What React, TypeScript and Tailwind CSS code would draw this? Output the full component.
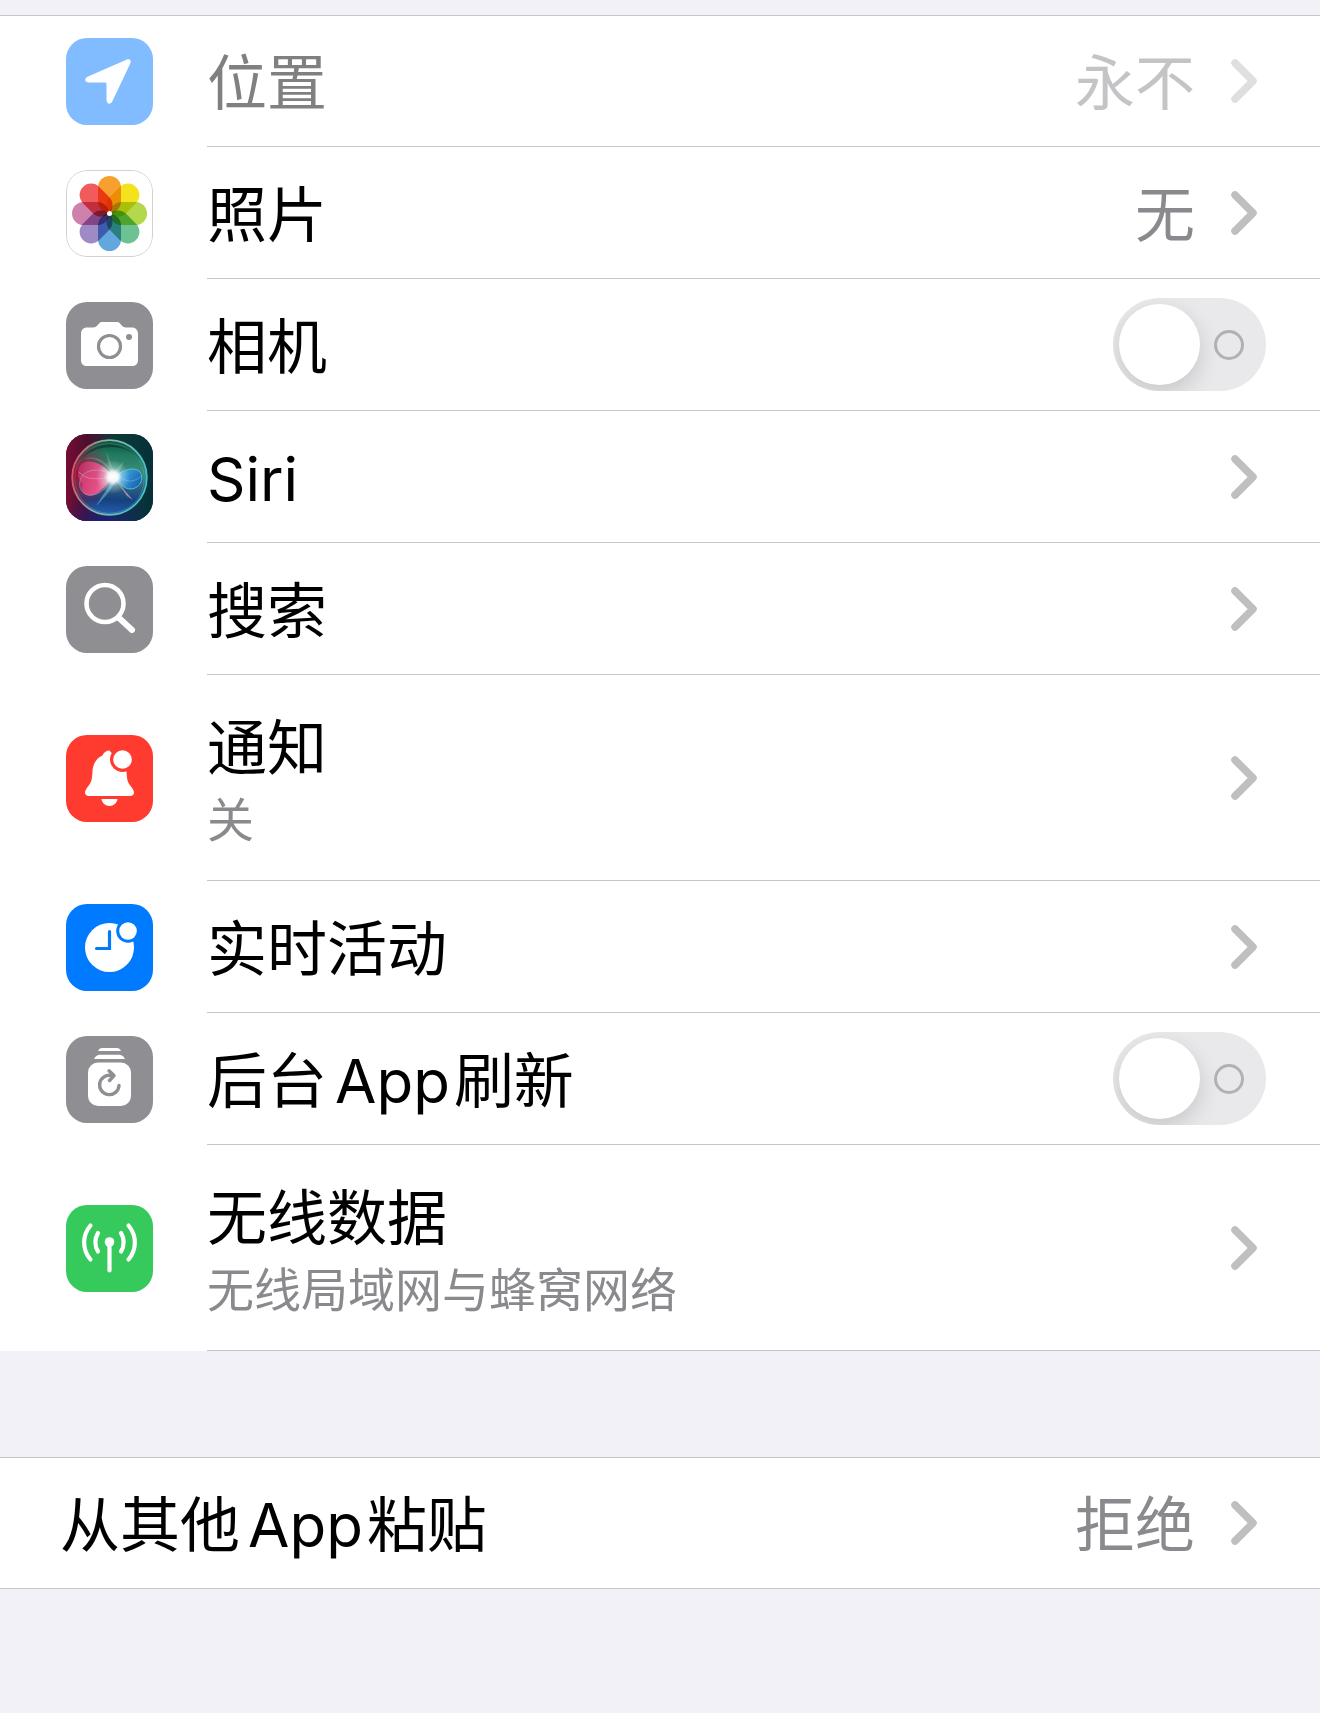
import clsx from 'clsx'
import React, { useState } from 'react'

function LocationIcon() {
    return (
        <path
            d="M61 21.5 L22 38.5 C18 40.5 18.500 44.500 23 44.500 H38.500 C40 44.500 40.500 45 40.500 46.500 V61.500 C40.500 66.500 44.500 67 46.500 63 L64.500 25 C65.500 22 63.500 20.500 61 21.500 Z"
            fill="#fff"
        />
    )
}

const petals = [
    { angle: 0, color: '#f7a030' },
    { angle: 45, color: '#f3e21c' },
    { angle: 90, color: '#b3d84c' },
    { angle: 135, color: '#6cc293' },
    { angle: 180, color: '#62a8de' },
    { angle: 225, color: '#a08ac6' },
    { angle: 270, color: '#cf81ae' },
    { angle: 315, color: '#f15b5c' },
]

function PhotosIcon() {
    return (
        <>
            <rect x="0.5" y="0.5" width="86" height="86" rx="20.500" fill="#fff" stroke="#d2d2d4" />
            <g style={{ isolation: 'isolate' }}>
                {petals.map((petal) => (
                    <rect
                        key={petal.angle}
                        x="32"
                        y="6"
                        width="23"
                        height="37"
                        rx="11.500"
                        fill={petal.color}
                        transform={`rotate(${petal.angle} 43.5 43.5)`}
                        style={{ mixBlendMode: 'multiply' }}
                    />
                ))}
            </g>
            <circle cx="43.500" cy="43.500" r="2.500" fill="#fff" />
        </>
    )
}

function CameraIcon() {
    return (
        <>
            <path
                d="M15 32 C15 28 17.500 25.500 21 25.500 H27 C29 25.500 30 25 31 23.800 L33 21.500 C34 20.400 35 20 36.500 20 H50.500 C52 20 53 20.400 54 21.500 L56 23.800 C57 25 58 25.500 60 25.500 H66 C69.500 25.500 72 28 72 32 V58 C72 62 69.500 64 66 64 H21 C17.500 64 15 62 15 58 Z"
                fill="#fff"
            />
            <circle cx="43.500" cy="44.500" r="11" fill="none" stroke="#8e8e93" strokeWidth="3.200" />
            <circle cx="63" cy="35" r="3" fill="#8e8e93" />
        </>
    )
}

function SiriIcon() {
    return (
        <>
            <defs>
                <linearGradient id="siri-base" x1="0" y1="0" x2="1" y2="0">
                    <stop offset="0" stopColor="#780c33" />
                    <stop offset="0.250" stopColor="#4a0f2e" />
                    <stop offset="0.550" stopColor="#0d3a36" />
                    <stop offset="1" stopColor="#06303a" />
                </linearGradient>
                <radialGradient id="siri-floor" cx="0.450" cy="1.050" r="0.500">
                    <stop offset="0" stopColor="#1b1f7c" />
                    <stop offset="1" stopColor="#1b1f7c" stopOpacity="0" />
                </radialGradient>
                <linearGradient id="siri-orb" x1="0.550" y1="0" x2="0.500" y2="1">
                    <stop offset="0" stopColor="#0b4f3f" />
                    <stop offset="0.180" stopColor="#1f7a5e" />
                    <stop offset="0.400" stopColor="#3d8a78" />
                    <stop offset="0.600" stopColor="#2f6480" />
                    <stop offset="0.800" stopColor="#17407f" />
                    <stop offset="1" stopColor="#2360b0" />
                </linearGradient>
                <radialGradient id="siri-red" cx="0.050" cy="0.450" r="0.500">
                    <stop offset="0" stopColor="#9c1238" />
                    <stop offset="0.400" stopColor="#8a1a3e" stopOpacity="0.750" />
                    <stop offset="1" stopColor="#8a1a3e" stopOpacity="0" />
                </radialGradient>
                <linearGradient id="siri-ring" x1="0" y1="0.400" x2="1" y2="0.600">
                    <stop offset="0" stopColor="#d8566c" />
                    <stop offset="0.400" stopColor="#86b8a6" />
                    <stop offset="1" stopColor="#3cc4cc" />
                </linearGradient>
                <linearGradient id="siri-pink" x1="0" y1="0.200" x2="1" y2="0.400">
                    <stop offset="0" stopColor="#b92a5c" />
                    <stop offset="0.600" stopColor="#e0588c" />
                    <stop offset="1" stopColor="#f7d3e4" />
                </linearGradient>
                <linearGradient id="siri-blue" x1="0" y1="0" x2="1" y2="0.400">
                    <stop offset="0" stopColor="#d8f2fa" />
                    <stop offset="0.350" stopColor="#3fa4dd" />
                    <stop offset="1" stopColor="#1c6ab4" />
                </linearGradient>
                <radialGradient id="siri-glow">
                    <stop offset="0" stopColor="#fff" />
                    <stop offset="0.300" stopColor="#fff" stopOpacity="0.900" />
                    <stop offset="0.550" stopColor="#dcf5f0" stopOpacity="0.350" />
                    <stop offset="1" stopColor="#dcf5f0" stopOpacity="0" />
                </radialGradient>
            </defs>
            <rect width="87" height="87" fill="url(#siri-base)" />
            <rect width="87" height="87" fill="url(#siri-floor)" />
            <circle cx="43.500" cy="43.500" r="37" fill="url(#siri-orb)" />
            <circle cx="43.500" cy="43.500" r="37" fill="url(#siri-red)" />
            <path d="M12 28 C22 6 62 2 75 28 C62 8 30 8 12 28 Z" fill="#062f28" opacity="0.550" />
            <path
                d="M47 43 C42 31 30 22 19 25 C24 22 40 22 48 42 Z"
                fill="#a9a0a4"
                opacity="0.400"
            />
            <path
                d="M47 43 C40 32 28 26 19 28 C10 31 10 45 17 50 C12 60 24 66 34 57 C40 52 43 47 47 43 Z"
                fill="url(#siri-pink)"
            />
            <path
                d="M47 43 C38 34 22 34 16 42 C10 52 16 63 27 61 C38 59 42 50 47 43 Z"
                fill="#e5467f"
                opacity="0.450"
                stroke="#8fd5e8"
                strokeWidth="1"
            />
            <path d="M13 38 C20 47 34 45 46 43" fill="none" stroke="#f5a3c0" opacity="0.500" />
            <path
                d="M47 43 C56 37 66 32 73 37 C79 43 75 54 65 55 C57 55 53 48 47 43 Z"
                fill="url(#siri-blue)"
                stroke="#4cc3da"
                strokeWidth="1"
            />
            <path d="M56 44 C64 50 70 46 76 42" fill="none" stroke="#5fd0ea" opacity="0.500" />
            <path d="M47 45 C42 54 36 62 30 72 C40 62 46 55 50 46 Z" fill="#6cc4dc" opacity="0.550" />
            <path d="M49 45 L67 66 L61 62 Z" fill="#d3a5c4" opacity="0.700" />
            <path d="M45 44 L40 17 L48 37 L58 27 L51 44 Z" fill="#e2f7ef" opacity="0.200" />
            <circle cx="47" cy="43" r="17" fill="url(#siri-glow)" />
            <circle cx="43.500" cy="43.500" r="37.300" fill="none" stroke="url(#siri-ring)" strokeWidth="1.800" />
            <circle cx="43.500" cy="44.500" r="34.800" fill="none" stroke="url(#siri-ring)" strokeWidth="1" opacity="0.350" />
        </>
    )
}

function SearchIcon() {
    return (
        <>
            <circle cx="39" cy="37.500" r="18.500" fill="none" stroke="#fff" strokeWidth="4.600" />
            <path d="M52.500 51.500 L66 64" stroke="#fff" strokeWidth="6" strokeLinecap="round" />
        </>
    )
}

function BellIcon() {
    return (
        <>
            <path
                d="M43.500 15.500 C40 15.500 37.500 17.500 36.500 20.500 C30 23.500 27 29 26.500 36 C26 45 25.500 47 22 51.500 C20 54 19 56 19 57.500 C19 59.500 20.500 61 23 61 H64 C66.500 61 68 59.500 68 57.500 C68 56 67 54 65 51.500 C61.500 47 61 45 60.500 36 Z"
                fill="#fff"
            />
            <path d="M35.500 64 H51.500 C51 68 47.500 71 43.500 71 C39.500 71 36 68 35.500 64 Z" fill="#fff" />
            <circle cx="56.500" cy="24.500" r="12.500" fill="#ff3b30" />
            <circle cx="56.500" cy="24.500" r="9.300" fill="#fff" />
        </>
    )
}

function ActivityIcon() {
    return (
        <>
            <circle cx="43.500" cy="43.500" r="24.500" fill="#fff" />
            <path
                d="M43.500 27.500 V44.500 H30.500"
                fill="none"
                stroke="#007aff"
                strokeWidth="3.200"
                strokeLinecap="round"
            />
            <circle cx="62" cy="27" r="11.800" fill="#007aff" />
            <circle cx="62" cy="27" r="8.800" fill="#fff" />
        </>
    )
}

function RefreshIcon() {
    return (
        <>
            <path d="M32 15 C33 13 34 12 36 12 H51 C53 12 54 13 55 15 Z" fill="#fff" />
            <path d="M28 23 C29.500 20 31.500 18.800 34 18.800 H53 C55.500 18.800 57.500 20 59 23 Z" fill="#fff" />
            <rect x="22" y="26.500" width="43" height="43.500" rx="10" fill="#fff" />
            <path
                d="M53 49.500 A9.700 9.700 0 1 1 45.500 39.500"
                fill="none"
                stroke="#8e8e93"
                strokeWidth="3.400"
                strokeLinecap="round"
            />
            <path
                d="M43 34.800 L48 39.500 L43.500 44.500"
                fill="none"
                stroke="#8e8e93"
                strokeWidth="3.400"
                strokeLinecap="round"
                strokeLinejoin="round"
            />
        </>
    )
}

function AntennaIcon() {
    return (
        <g fill="none" stroke="#fff" strokeWidth="4.200" strokeLinecap="round">
            <circle cx="43.500" cy="37" r="4.800" fill="#fff" stroke="none" />
            <path d="M43.500 38 V65.500" />
            <path d="M32 28 C28.500 33.500 28.500 41 32 46.500" />
            <path d="M55 28 C58.500 33.500 58.500 41 55 46.500" />
            <path d="M24.500 20.500 C16 30.500 16 44.500 24.500 54.500" />
            <path d="M62.500 20.500 C71 30.500 71 44.500 62.500 54.500" />
        </g>
    )
}

function AppIcon({ className, children }: { className: string; children: React.ReactNode }) {
    return (
        <svg
            viewBox="0 0 87 87"
            aria-hidden="true"
            className={clsx('w-[87px] h-[87px] shrink-0 rounded-[21px]', className)}
        >
            {children}
        </svg>
    )
}

function Chevron({ disabled }: { disabled?: boolean }) {
    return (
        <svg
            viewBox="0 0 26 44"
            aria-hidden="true"
            className={clsx('w-[26px] h-11 shrink-0', disabled ? 'text-[#dfdfe0]' : 'text-[#bfbfc0]')}
        >
            <path
                d="M4 4 L22 22 L4 40"
                fill="none"
                stroke="currentColor"
                strokeWidth="7.500"
                strokeLinecap="round"
                strokeLinejoin="round"
            />
        </svg>
    )
}

function Latin({ children }: { children: React.ReactNode }) {
    return <span className="ml-2 mr-1">{children}</span>
}

type RowProps = {
    icon?: React.ReactNode
    title: React.ReactNode
    subtitle?: string
    value?: string
    disabled?: boolean
    height?: string
}

function LinkRow({ icon, title, subtitle, value, disabled, height = 'h-[132px]' }: RowProps) {
    return (
        <li>
            <button
                type="button"
                disabled={disabled}
                className={clsx('flex w-full items-center text-left', icon ? 'pl-[66px]' : 'pl-[60px]')}
            >
                {icon}
                <span
                    className={clsx(
                        'flex flex-1 items-center pr-[63px]',
                        icon && 'ml-[54px] border-b border-[#c6c6c8]',
                        height,
                    )}
                >
                    <span className="flex flex-1 flex-col pt-1">
                        <span className={clsx('text-[60px] leading-[80px]', disabled ? 'text-[#808080]' : 'text-black')}>
                            {title}
                        </span>
                        {subtitle && (
                            <span className="text-[47px] leading-[64px] text-[#8a8a8e]">{subtitle}</span>
                        )}
                    </span>
                    {value && (
                        <span
                            className={clsx(
                                'mr-9 pt-1 text-[60px] leading-[80px]',
                                disabled ? 'text-[#c4c4c6]' : 'text-[#8a8a8e]',
                            )}
                        >
                            {value}
                        </span>
                    )}
                    <Chevron disabled={disabled} />
                </span>
            </button>
        </li>
    )
}

function SwitchRow({ icon, title }: RowProps) {
    const [on, setOn] = useState(false)

    return (
        <li>
            <label className="flex w-full cursor-pointer items-center pl-[66px]">
                {icon}
                <span className="ml-[54px] flex h-[132px] flex-1 items-center border-b border-[#c6c6c8] pr-[54px]">
                    <span className="flex-1 pt-1 text-[60px] leading-[80px] text-black">{title}</span>
                    <input
                        type="checkbox"
                        role="switch"
                        checked={on}
                        onChange={(e) => setOn(e.target.checked)}
                        className="peer sr-only"
                    />
                    <span className="flex h-[93px] w-[153px] items-center overflow-hidden rounded-full bg-[#e9e9eb] px-[6px] peer-checked:flex-row-reverse peer-checked:bg-[#34c759]">
                        <span className="h-[81px] w-[81px] rounded-full bg-white shadow-[0_8px_22px_rgba(0,0,0,0.15)]" />
                        <span className="mx-[14px] h-[30px] w-[30px] rounded-full border-[3px] border-[#b1b1b2]" />
                    </span>
                </span>
            </label>
        </li>
    )
}

function App() {
    return (
        <main className="min-h-screen bg-[#f2f1f7] pt-[15px] font-['Inter','Noto_Sans_CJK_SC',sans-serif]">
            <ul className="border-t border-[#c6c6c8] bg-white">
                <LinkRow
                    icon={<AppIcon className="bg-[#80bcff]"><LocationIcon /></AppIcon>}
                    title="位置"
                    value="永不"
                    height="h-[131px]"
                    disabled
                />
                <LinkRow
                    icon={<AppIcon className="bg-white"><PhotosIcon /></AppIcon>}
                    title="照片"
                    value="无"
                />
                <SwitchRow
                    icon={<AppIcon className="bg-[#8e8e93]"><CameraIcon /></AppIcon>}
                    title="相机"
                />
                <LinkRow
                    icon={<AppIcon className="bg-[#072f3c]"><SiriIcon /></AppIcon>}
                    title="Siri"
                />
                <LinkRow
                    icon={<AppIcon className="bg-[#8e8e93]"><SearchIcon /></AppIcon>}
                    title="搜索"
                />
                <LinkRow
                    icon={<AppIcon className="bg-[#ff3b30]"><BellIcon /></AppIcon>}
                    title="通知"
                    subtitle="关"
                    height="h-[206px]"
                />
                <LinkRow
                    icon={<AppIcon className="bg-[#007aff]"><ActivityIcon /></AppIcon>}
                    title="实时活动"
                />
                <SwitchRow
                    icon={<AppIcon className="bg-[#8e8e93]"><RefreshIcon /></AppIcon>}
                    title={<>后台<Latin>App</Latin>刷新</>}
                />
                <LinkRow
                    icon={<AppIcon className="bg-[#36c95b]"><AntennaIcon /></AppIcon>}
                    title="无线数据"
                    subtitle="无线局域网与蜂窝网络"
                    height="h-[206px]"
                />
            </ul>
            <ul className="mt-[106px] border-y border-[#c6c6c8] bg-white">
                <LinkRow
                    title={<>从其他<Latin>App</Latin>粘贴</>}
                    value="拒绝"
                    height="h-[130px]"
                />
            </ul>
        </main>
    )
}

export default App
